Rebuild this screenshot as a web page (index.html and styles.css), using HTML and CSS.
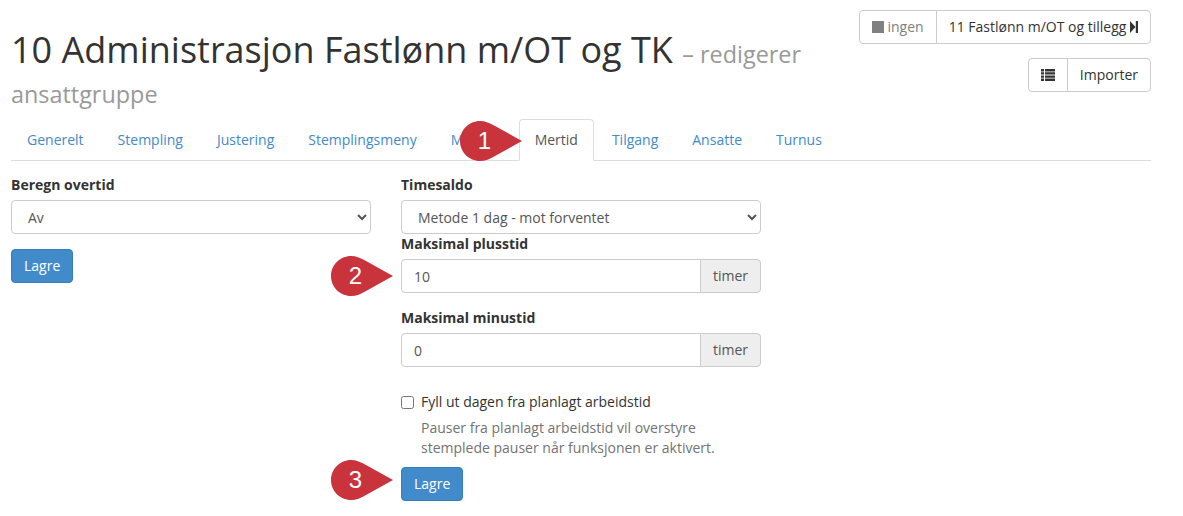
FILE: index.html
```html
<!DOCTYPE html>
<html>
  <head>
    <title>Mertid</title>
    <meta charset="utf-8">
    <link rel="stylesheet" href="styles.css">
  </head>
  <body>
    <div class="page">
      <div class="header">
        <h1>10 Administrasjon Fastlønn m/OT og TK <small>– redigerer ansattgruppe</small></h1>
        <div class="header__actions">
          <div class="btn-group">
            <a class="btn btn--muted">
              <svg class="icon" width="12" height="12" viewBox="0 0 12 12"><rect width="12" height="12" fill="#808080"/></svg>
              ingen
            </a>
            <a class="btn">
              11 Fastlønn m/OT og tillegg
              <svg class="icon" width="8" height="12" viewBox="0 0 8 12"><path d="M0 0L5.5 6L0 12Z M5.8 0H8V12H5.8Z" fill="#333"/></svg>
            </a>
          </div>
          <div class="btn-group">
            <a class="btn btn--icon">
              <svg class="icon" width="14" height="12" viewBox="0 0 14 12"><path d="M0 0H3V2.4H0Z M4 0H14V2.4H4Z M0 3.2H3V5.6H0Z M4 3.2H14V5.6H4Z M0 6.4H3V8.8H0Z M4 6.4H14V8.8H4Z M0 9.6H3V12H0Z M4 9.6H14V12H4Z" fill="#333"/></svg>
            </a>
            <a class="btn">Importer</a>
          </div>
        </div>
      </div>

      <ul class="tabs">
        <li><a>Generelt</a></li>
        <li><a>Stempling</a></li>
        <li><a>Justering</a></li>
        <li><a>Stemplingsmeny</a></li>
        <li><a class="tabs__covered">Matrise</a></li>
        <li class="active"><a>Mertid</a></li>
        <li><a>Tilgang</a></li>
        <li><a>Ansatte</a></li>
        <li><a>Turnus</a></li>
      </ul>

      <div class="columns">
        <div class="column">
          <label class="field-label">Beregn overtid</label>
          <select class="form-control"><option>Av</option></select>
          <button class="btn-primary btn-primary--first">Lagre</button>
        </div>

        <div class="column">
          <label class="field-label">Timesaldo</label>
          <select class="form-control"><option>Metode 1 dag - mot forventet</option></select>

          <label class="field-label">Maksimal plusstid</label>
          <div class="input-group">
            <input class="form-control" type="text" value="10">
            <span class="addon">timer</span>
          </div>

          <label class="field-label field-label--spaced">Maksimal minustid</label>
          <div class="input-group">
            <input class="form-control" type="text" value="0">
            <span class="addon">timer</span>
          </div>

          <div class="check">
            <input type="checkbox" id="fyll">
            <div>
              <label for="fyll">Fyll ut dagen fra planlagt arbeidstid</label>
              <p class="help">Pauser fra planlagt arbeidstid vil overstyre stemplede pauser når funksjonen er aktivert.</p>
            </div>
          </div>

          <button class="btn-primary">Lagre</button>
        </div>
      </div>

      <div class="marker marker--one">
        <svg width="62" height="40" viewBox="0 0 62 40"><path d="M20 0C25 0 30 2 35 5L62 20L35 35C30 38 25 40 20 40C9 40 0 31 0 20C0 9 9 0 20 0Z" fill="#c9343c"/></svg>
        <span>1</span>
      </div>
      <div class="marker marker--two">
        <svg width="62" height="40" viewBox="0 0 62 40"><path d="M20 0C25 0 30 2 35 5L62 20L35 35C30 38 25 40 20 40C9 40 0 31 0 20C0 9 9 0 20 0Z" fill="#c9343c"/></svg>
        <span>2</span>
      </div>
      <div class="marker marker--three">
        <svg width="62" height="40" viewBox="0 0 62 40"><path d="M20 0C25 0 30 2 35 5L62 20L35 35C30 38 25 40 20 40C9 40 0 31 0 20C0 9 9 0 20 0Z" fill="#c9343c"/></svg>
        <span>3</span>
      </div>
    </div>
  </body>
</html>
```

FILE: styles.css
```css
* {
  box-sizing: border-box;
}

body {
  margin: 0;
  background: #fff;
  color: #333;
  font-family: "Open Sans", sans-serif;
  font-size: 14px;
  line-height: 1.6;
}

.page {
  position: relative;
  width: 1140px;
  margin-left: 11px;
}

.header {
  display: flex;
  justify-content: space-between;
  height: 119px;
}

h1 {
  width: 810px;
  margin: 30px 0 0;
  font-size: 36px;
  font-weight: 400;
  line-height: 40px;
}

h1 small {
  color: #999;
  font-size: 23.4px;
  line-height: 1;
}

.header__actions {
  display: flex;
  flex-direction: column;
  align-items: flex-end;
  gap: 14px;
  padding-top: 10px;
}

.btn-group {
  display: flex;
}

.btn {
  height: 34px;
  padding: 6px 12px;
  border: 1px solid #ccc;
  background: #fff;
  color: #333;
  line-height: 20px;
  white-space: nowrap;
}

.btn:first-child {
  border-radius: 4px 0 0 4px;
}

.btn:last-child {
  margin-left: -1px;
  border-radius: 0 4px 4px 0;
}

.btn--muted {
  color: #808080;
}

.btn--icon {
  display: flex;
  align-items: center;
}

.icon {
  vertical-align: -1px;
}

.tabs {
  display: flex;
  margin: 0;
  padding: 0;
  height: 42px;
  border-bottom: 1px solid #ddd;
  list-style: none;
}

.tabs li {
  margin-right: 2px;
  height: 42px;
}

.tabs a {
  display: block;
  height: 42px;
  padding: 10px 15px;
  border: 1px solid transparent;
  border-radius: 4px 4px 0 0;
  color: #428bca;
  line-height: 20px;
}

.tabs .tabs__covered {
  width: 82px;
}

.tabs .active a {
  border-color: #ddd #ddd #fff;
  background: #fff;
  color: #555;
}

.columns {
  display: grid;
  grid-template-columns: 360px 360px;
  gap: 30px;
  padding-top: 14px;
}

.field-label {
  display: block;
  height: 25px;
  font-weight: 700;
  line-height: 20px;
}

.form-control {
  display: block;
  width: 100%;
  height: 34px;
  padding: 6px 12px;
  border: 1px solid #ccc;
  border-radius: 4px;
  background: #fff;
  color: #555;
  font-family: "Open Sans", sans-serif;
  font-size: 14px;
  line-height: 20px;
}

.field-label--spaced {
  margin-top: 15px;
}

.input-group {
  display: flex;
}

.input-group .form-control {
  flex: 1;
  border-radius: 4px 0 0 4px;
}

.addon {
  width: 61px;
  height: 34px;
  margin-left: -1px;
  padding: 6px 12px;
  border: 1px solid #ccc;
  border-radius: 0 4px 4px 0;
  background: #eee;
  color: #555;
  line-height: 20px;
  text-align: center;
}

.check {
  display: flex;
  gap: 7px;
  margin-top: 24px;
}

.check input {
  width: 13px;
  height: 13px;
  margin: 5px 0 0;
}

.check label {
  display: block;
  line-height: 22px;
}

.help {
  margin: 5px 0 0;
  color: #737373;
  line-height: 20px;
}

.btn-primary {
  display: block;
  height: 34px;
  margin-top: 9px;
  padding: 6px 12px;
  border: 1px solid #357ebd;
  border-radius: 4px;
  background: #428bca;
  color: #fff;
  font-family: "Open Sans", sans-serif;
  font-size: 14px;
  line-height: 20px;
}

.btn-primary--first {
  margin-top: 15px;
}

.marker {
  position: absolute;
  width: 62px;
  height: 40px;
}

.marker svg {
  display: block;
}

.marker span {
  position: absolute;
  left: 0;
  top: 0;
  width: 49px;
  color: #fff;
  font-family: "Liberation Sans", sans-serif;
  font-size: 24px;
  line-height: 40px;
  text-align: center;
}

.marker--one {
  left: 449px;
  top: 121px;
}

.marker--two {
  left: 320px;
  top: 256px;
}

.marker--three {
  left: 320px;
  top: 460px;
}
```
